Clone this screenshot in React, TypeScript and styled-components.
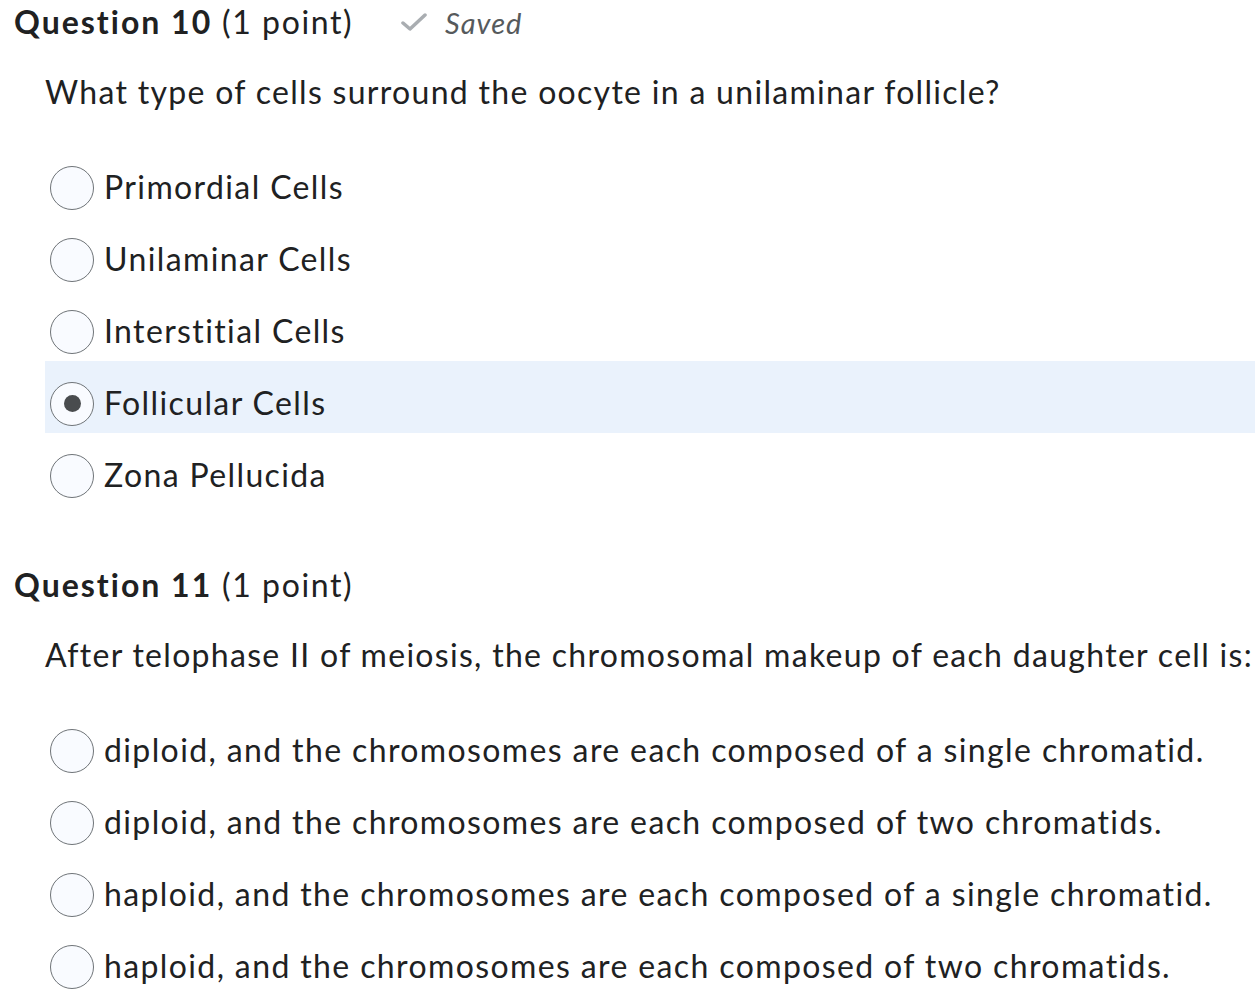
import React from 'react'
import styled, { createGlobalStyle } from 'styled-components'

const GlobalStyle = createGlobalStyle`
  html, body {
    margin: 0;
    padding: 0;
    background: #fff;
    overflow-x: hidden;
  }
  body {
    font-family: Lato, 'Noto Sans', sans-serif;
    color: #202122;
  }
`

const Page = styled.div`
  display: flex;
  flex-direction: column;
  padding-left: 14px;
  width: 1500px;
`

const Question = styled.section<{ $gap: number }>`
  display: flex;
  flex-direction: column;
  margin-bottom: ${(p) => p.$gap}px;
`

const Header = styled.div`
  display: flex;
  align-items: center;
  height: 44px;
`

const Title = styled.h2`
  margin: 0;
  font-size: 32px;
  font-weight: 700;
  line-height: 44px;
  letter-spacing: 2px;
`

const Points = styled.span`
  font-weight: 400;
  letter-spacing: 1.6px;
`

const SavedTag = styled.span`
  display: flex;
  align-items: center;
  gap: 18px;
  margin-left: 48px;
  font-style: italic;
  font-size: 29px;
  letter-spacing: 1px;
  color: #565a5c;
`

const Body = styled.div`
  display: flex;
  flex-direction: column;
  margin-left: 31px;
`

const Prompt = styled.p`
  margin: 26px 0 0;
  font-size: 32px;
  letter-spacing: 1.3px;
  line-height: 44px;
  white-space: nowrap;
`

const Options = styled.div<{ $top: number }>`
  display: flex;
  flex-direction: column;
  margin-top: ${(p) => p.$top}px;
`

const Option = styled.label<{ $selected?: boolean }>`
  display: flex;
  align-items: center;
  gap: 10px;
  height: 72px;
  padding: 11px 0 0 5px;
  box-sizing: border-box;
  background: ${(p) => (p.$selected ? '#eaf2fc' : 'transparent')};
  font-size: 32px;
  letter-spacing: 1.38px;
  white-space: nowrap;
`

const Radio = styled.span<{ $checked?: boolean }>`
  width: 44px;
  height: 44px;
  margin-top: 2px;
  box-sizing: border-box;
  border-radius: 50%;
  border: 1.5px solid #6f7478;
  background: #f9fbff;
  display: flex;
  align-items: center;
  justify-content: center;
  flex-shrink: 0;

  &::after {
    content: '';
    display: ${(p) => (p.$checked ? 'block' : 'none')};
    width: 17px;
    height: 17px;
    border-radius: 50%;
    background: #494c4e;
  }
`

const Check = () => (
  <svg width="26" height="18" viewBox="0 0 26 18" fill="none">
    <path
      d="M2 10 L9 16 L24 2"
      stroke="#a9adb1"
      strokeWidth="3.5"
      strokeLinecap="round"
      strokeLinejoin="round"
    />
  </svg>
)

type Q = {
  num: number
  prompt: string
  options: string[]
  selected?: number
  saved?: boolean
  optionsTop: number
  gap: number
}

const questions: Q[] = [
  {
    num: 10,
    prompt: 'What type of cells surround the oocyte in a unilaminar follicle?',
    options: ['Primordial Cells', 'Unilaminar Cells', 'Interstitial Cells', 'Follicular Cells', 'Zona Pellucida'],
    selected: 3,
    saved: true,
    optionsTop: 31,
    gap: 58,
  },
  {
    num: 11,
    prompt: 'After telophase II of meiosis, the chromosomal makeup of each daughter cell is:',
    options: [
      'diploid, and the chromosomes are each composed of a single chromatid.',
      'diploid, and the chromosomes are each composed of two chromatids.',
      'haploid, and the chromosomes are each composed of a single chromatid.',
      'haploid, and the chromosomes are each composed of two chromatids.',
    ],
    optionsTop: 31,
    gap: 10,
  },
]

const App = () => {
  return (
    <>
      <GlobalStyle />
      <Page>
        {questions.map((q) => (
          <Question key={q.num} $gap={q.gap}>
            <Header>
              <Title>
                Question {q.num} <Points>(1 point)</Points>
              </Title>
              {q.saved && (
                <SavedTag>
                  <Check />
                  Saved
                </SavedTag>
              )}
            </Header>
            <Body>
              <Prompt>{q.prompt}</Prompt>
              <Options $top={q.optionsTop}>
                {q.options.map((o, i) => (
                  <Option key={o} $selected={q.selected === i}>
                    <Radio $checked={q.selected === i} />
                    {o}
                  </Option>
                ))}
              </Options>
            </Body>
          </Question>
        ))}
      </Page>
    </>
  )
}

export default App
